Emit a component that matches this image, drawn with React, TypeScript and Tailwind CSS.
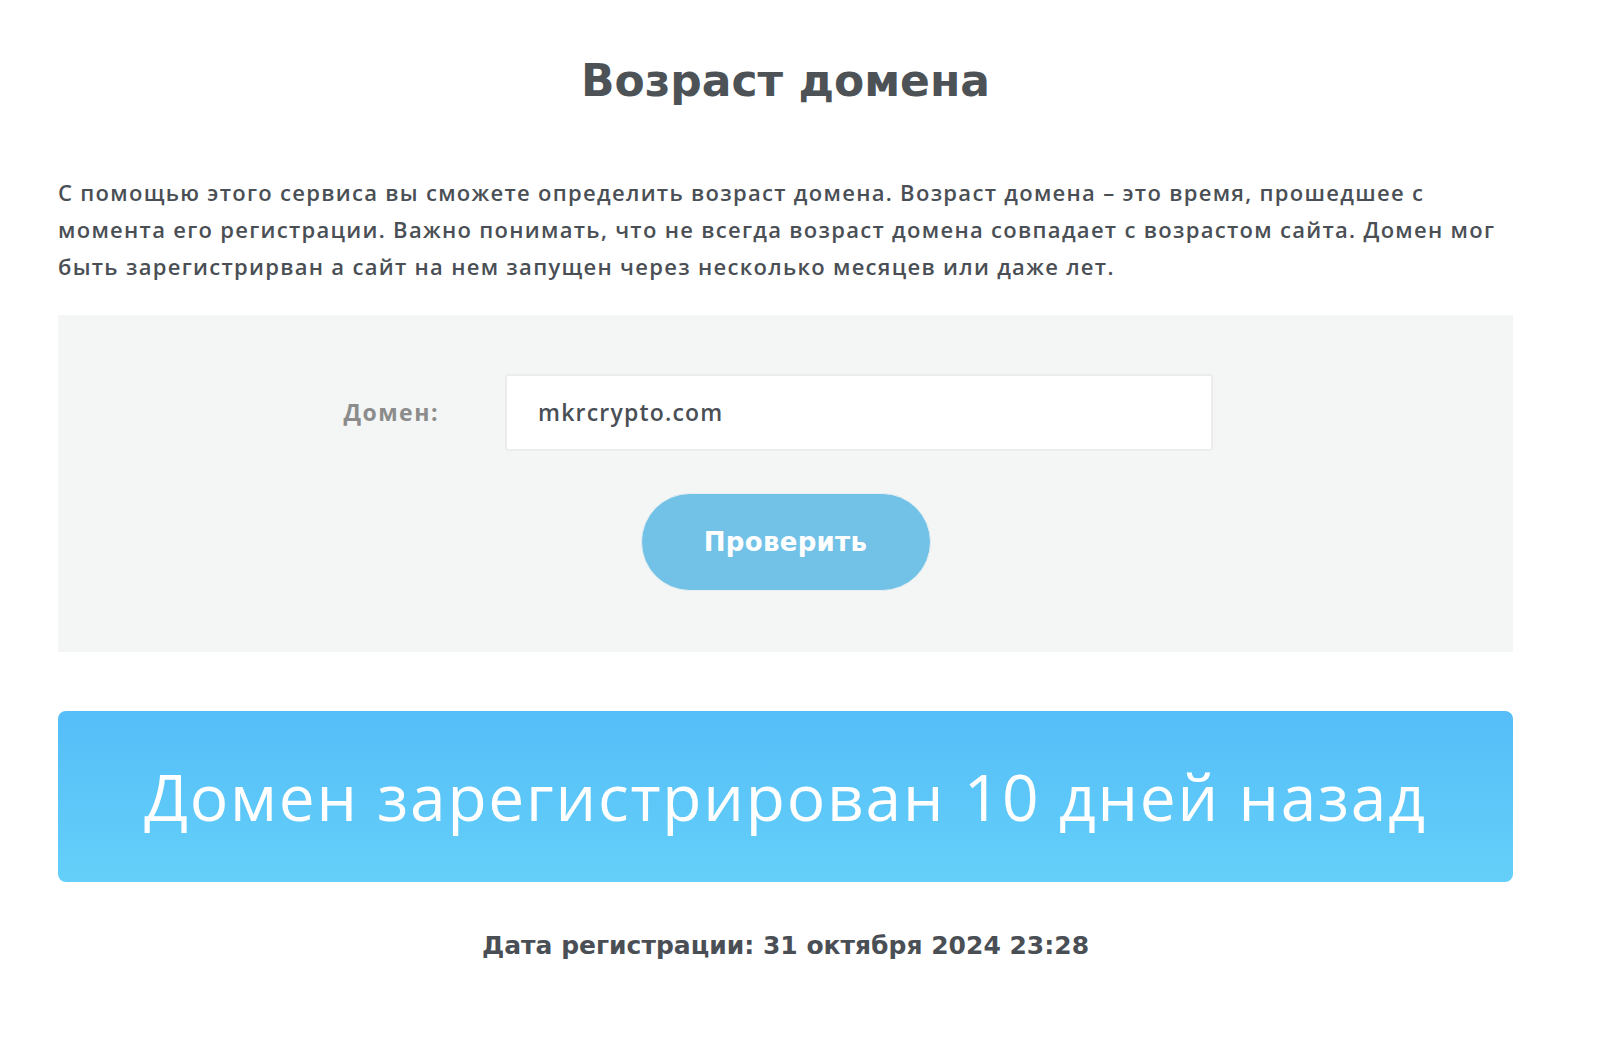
import React from "react";

export default function App() {
  return (
    <div className="min-h-[1052px] bg-white">
      <div className="ml-[58px] w-[1455px] pt-[52px]">
        <h1
          className="text-center text-[44px] leading-[58px] font-bold text-[#4d5257]"
          style={{ fontFamily: '"DejaVu Sans", sans-serif' }}
        >
          Возраст домена
        </h1>
        <p
          className="mt-[64px] text-[22px] leading-[37px] font-semibold tracking-[1.3px] text-[#4a4f55]"
          style={{ fontFamily: '"Open Sans", sans-serif' }}
        >
          С помощью этого сервиса вы сможете определить возраст домена. Возраст домена – это время, прошедшее с
          <br />
          момента его регистрации. Важно понимать, что не всегда возраст домена совпадает с возрастом сайта. Домен мог
          <br />
          быть зарегистрирван а сайт на нем запущен через несколько месяцев или даже лет.
        </p>
        <div className="mt-[30px] h-[337px] bg-[#f4f6f5] pt-[59px]">
          <div className="flex items-center">
            <div
              className="w-[447px] pr-[66px] text-right text-[23px] font-bold tracking-[1.5px] text-[#8c8c8c]"
              style={{ fontFamily: '"Open Sans", sans-serif' }}
            >
              Домен:
            </div>
            <div className="flex h-[77px] w-[708px] items-center rounded-[3px] border-2 border-[#ececec] bg-white pl-[31px]">
              <span
                className="text-[23px] font-semibold tracking-[1.2px] text-[#4a4f55]"
                style={{ fontFamily: '"Open Sans", sans-serif' }}
              >
                mkrcrypto.com
              </span>
            </div>
          </div>
          <div className="mt-[42px] flex justify-center">
            <button
              className="h-[98px] w-[290px] rounded-full border border-[#e6eef2] bg-[#72c2e7] text-[26px] font-bold tracking-[0.3px] text-white"
              style={{ fontFamily: '"DejaVu Sans", sans-serif' }}
            >
              Проверить
            </button>
          </div>
        </div>
        <div className="mt-[59px] flex h-[171px] items-center justify-center rounded-[8px] bg-gradient-to-b from-[#55bdf8] to-[#64d0f9]">
          <span
            className="text-[64px] font-normal tracking-[1.8px] text-white"
            style={{ fontFamily: '"Open Sans", sans-serif' }}
          >
            Домен зарегистрирован 10 дней назад
          </span>
        </div>
        <div
          className="mt-[45px] text-center text-[25px] font-bold text-[#4a4f55]"
          style={{ fontFamily: '"DejaVu Sans", sans-serif' }}
        >
          Дата регистрации: 31 октября 2024 23:28
        </div>
      </div>
    </div>
  );
}
